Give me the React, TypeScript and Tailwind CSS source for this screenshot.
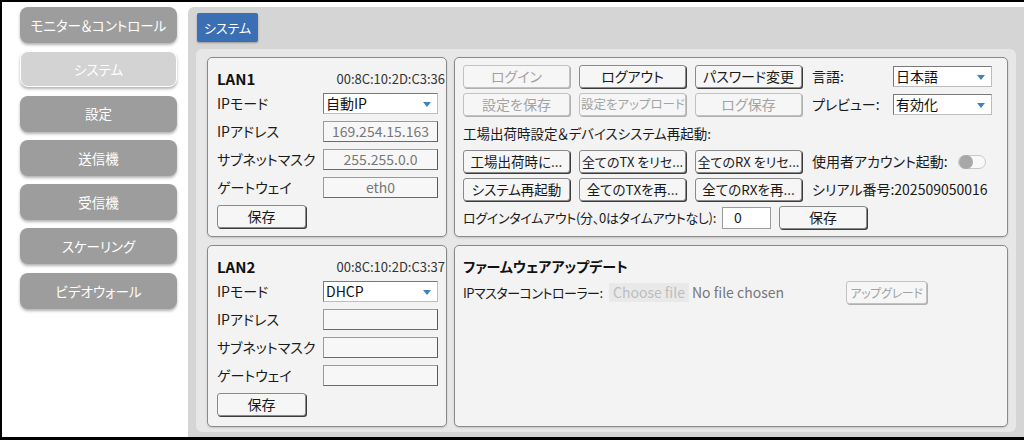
import React from "react"

const nav = ["モニター＆コントロール", "システム", "設定", "送信機", "受信機", "スケーリング", "ビデオウォール"]

function Btn({ children, disabled, className = "" }: { children: React.ReactNode; disabled?: boolean; className?: string }) {
    return (
        <div
            className={
                "h-[23px] shrink-0 flex items-center justify-center rounded-[3px] border bg-[#f6f6f6] whitespace-nowrap overflow-hidden " +
                (disabled
                    ? "border-[#c2c2c2] text-[#a3a3a3] shadow-[1px_1px_0_#b0b0b0] "
                    : "border-[#8a8a8a] text-[#1a1a1a] shadow-[1px_1px_0_#3c3c3c] ") +
                className
            }
        >
            {children}
        </div>
    )
}

function Select({ value, className = "" }: { value: string; className?: string }) {
    return (
        <div
            className={
                "relative h-[21px] flex items-center bg-white border border-[#7a7a7a] border-r-[#bdbdbd] border-b-[#bdbdbd] pl-[2px] text-[14px] text-[#111] " +
                className
            }
        >
            {value}
            <span className="absolute right-[6px] top-[8px] h-0 w-0 border-x-[4px] border-t-[5px] border-x-transparent border-t-[#3d82c6]" />
        </div>
    )
}

function Field({ value }: { value: string }) {
    return (
        <div className="h-[21px] flex items-center justify-center border border-[#9a9a9a] border-r-[#5a5a5a] border-b-[#6a6a6a] bg-[#f7f7f7] text-[14px] text-[#777]">
            {value}
        </div>
    )
}

function LanPanel({ name, mac, mode, ip, mask, gw }: { name: string; mac: string; mode: string; ip: string; mask: string; gw: string }) {
    return (
        <div className="rounded-[5px] border border-[#8a8a8a] bg-[#f3f3f3] pl-[9px] pt-[7px] shadow-[0_1px_2px_rgba(0,0,0,0.15)]">
            <div className="flex h-[28px] items-center justify-between pr-[1px]">
                <span className="text-[15px] font-bold text-[#111]">{name}</span>
                <span className="text-[13px] text-[#333]">{mac}</span>
            </div>
            <div className="grid grid-cols-[106px_115px] items-center gap-y-[7px] text-[14px] text-[#1a1a1a]">
                <span>IPモード</span>
                <Select value={mode} />
                <span>IPアドレス</span>
                <Field value={ip} />
                <span>サブネットマスク</span>
                <Field value={mask} />
                <span>ゲートウェイ</span>
                <Field value={gw} />
            </div>
            <Btn className="mt-[7px] w-[89px] text-[14px]">保存</Btn>
        </div>
    )
}

export default function App() {
    return (
        <div className="flex h-[440px] w-[1024px] overflow-hidden border-t-2 border-b-[3px] border-l-2 border-black bg-white font-['Noto_Sans_CJK_JP',sans-serif] [font-feature-settings:'palt']">
            {/* sidebar */}
            <div className="flex w-[186px] shrink-0 flex-col gap-[8.3px] pl-[18px] pt-[5px]">
                {nav.map((n) => (
                    <div
                        key={n}
                        className={
                            "flex h-[36px] w-[157px] items-center justify-center rounded-[8px] text-[13.5px] text-white shadow-[0_2px_3px_rgba(0,0,0,0.3)] " +
                            (n === "システム" ? "border border-white bg-[#d3d3d3]" : "bg-[#9d9d9d]")
                        }
                    >
                        {n}
                    </div>
                ))}
            </div>

            {/* main */}
            <div className="mt-[5px] flex flex-1 flex-col rounded-tl-[6px] bg-[#d5d5d5]">
                <div className="h-[42px] shrink-0 pl-[9px] pt-[6px]">
                    <div className="flex h-[29px] w-[61px] items-center justify-center rounded-[2px] bg-[#3b6fb3] text-[13px] text-white shadow-[0_1px_2px_rgba(0,0,0,0.3)]">
                        システム
                    </div>
                </div>

                <div className="mb-[6px] ml-[8px] mr-[8px] grid flex-1 grid-cols-[240px_554px] grid-rows-[180px_182px] gap-x-[7px] gap-y-[8px] rounded-[6px] bg-[#e7e7e7] pb-[5px] pl-[11px] pr-[8px] pt-[8px]">
                    <LanPanel name="LAN1" mac="00:8C:10:2D:C3:36" mode="自動IP" ip="169.254.15.163" mask="255.255.0.0" gw="eth0" />

                    {/* system panel */}
                    <div className="rounded-[5px] border border-[#8a8a8a] bg-[#f3f3f3] pl-[8px] pt-[7px] text-[14px] text-[#1a1a1a] shadow-[0_1px_2px_rgba(0,0,0,0.15)]">
                        <div className="flex items-center">
                            <Btn disabled className="w-[107px] text-[14px]">ログイン</Btn>
                            <Btn className="ml-[9px] w-[107px] text-[14px]">ログアウト</Btn>
                            <Btn className="ml-[9px] w-[107px] text-[14px]">パスワード変更</Btn>
                            <span className="ml-[10px] w-[81px]">言語:</span>
                            <Select value="日本語" className="w-[99px]" />
                        </div>
                        <div className="mt-[5px] flex items-center">
                            <Btn disabled className="w-[107px] text-[14px]">設定を保存</Btn>
                            <Btn disabled className="ml-[9px] w-[107px] justify-start pl-[1px] text-[12.5px]">設定をアップロード</Btn>
                            <Btn disabled className="ml-[9px] w-[107px] text-[14px]">ログ保存</Btn>
                            <span className="ml-[10px] w-[81px]">プレビュー:</span>
                            <Select value="有効化" className="w-[99px]" />
                        </div>
                        <div className="flex h-[34px] items-center text-[13.5px]">工場出荷時設定＆デバイスシステム再起動:</div>
                        <div className="flex items-center">
                            <Btn className="w-[107px] text-[13.5px]">工場出荷時に...</Btn>
                            <Btn className="ml-[9px] w-[107px] text-[13px]">全てのTX をリセ...</Btn>
                            <Btn className="ml-[9px] w-[107px] text-[13px]">全てのRX をリセ...</Btn>
                            <span className="ml-[10px]">使用者アカウント起動:</span>
                            <div className="ml-[10px] flex h-[14px] w-[28px] items-center rounded-full border border-[#c8c8c8] bg-[#f8f8f8]">
                                <div className="h-[14px] w-[14px] rounded-full bg-[#a8a8a8]" />
                            </div>
                        </div>
                        <div className="mt-[5px] flex items-center">
                            <Btn className="w-[107px] text-[13.5px]">システム再起動</Btn>
                            <Btn className="ml-[9px] w-[107px] text-[13.5px]">全てのTXを再...</Btn>
                            <Btn className="ml-[9px] w-[107px] text-[13.5px]">全てのRXを再...</Btn>
                            <span className="ml-[10px]">シリアル番号:202509050016</span>
                        </div>
                        <div className="mt-[5px] flex items-center">
                            <span className="w-[259px] whitespace-nowrap text-[13px] tracking-[-0.3px]">ログインタイムアウト(分、0はタイムアウトなし):</span>
                            <div className="flex h-[22px] w-[49px] items-center border border-[#9a9a9a] bg-white pl-[11px]">0</div>
                            <Btn className="ml-[8px] w-[88px] text-[14px]">保存</Btn>
                        </div>
                    </div>

                    <LanPanel name="LAN2" mac="00:8C:10:2D:C3:37" mode="DHCP" ip="" mask="" gw="" />

                    {/* firmware panel */}
                    <div className="rounded-[5px] border border-[#8a8a8a] bg-[#f3f3f3] pl-[8px] pt-[6px] shadow-[0_1px_2px_rgba(0,0,0,0.15)]">
                        <div className="flex h-[28px] items-center text-[14px] font-bold text-[#111]">ファームウェアアップデート</div>
                        <div className="flex h-[25px] items-center">
                            <span className="w-[146px] text-[13px] tracking-[-0.5px] text-[#1a1a1a]">IPマスターコントローラー:</span>
                            <div className="flex w-[237px] items-center">
                                <div className="flex h-[19px] w-[80px] items-center justify-center bg-[#e9e9e9] text-[14px] text-[#bdbdbd]">Choose file</div>
                                <span className="ml-[3px] text-[14px] text-[#777]">No file chosen</span>
                            </div>
                            <Btn disabled className="h-[21px] w-[81px] text-[12px] tracking-[-0.3px]">アップグレード</Btn>
                        </div>
                    </div>
                </div>
            </div>
        </div>
    )
}
